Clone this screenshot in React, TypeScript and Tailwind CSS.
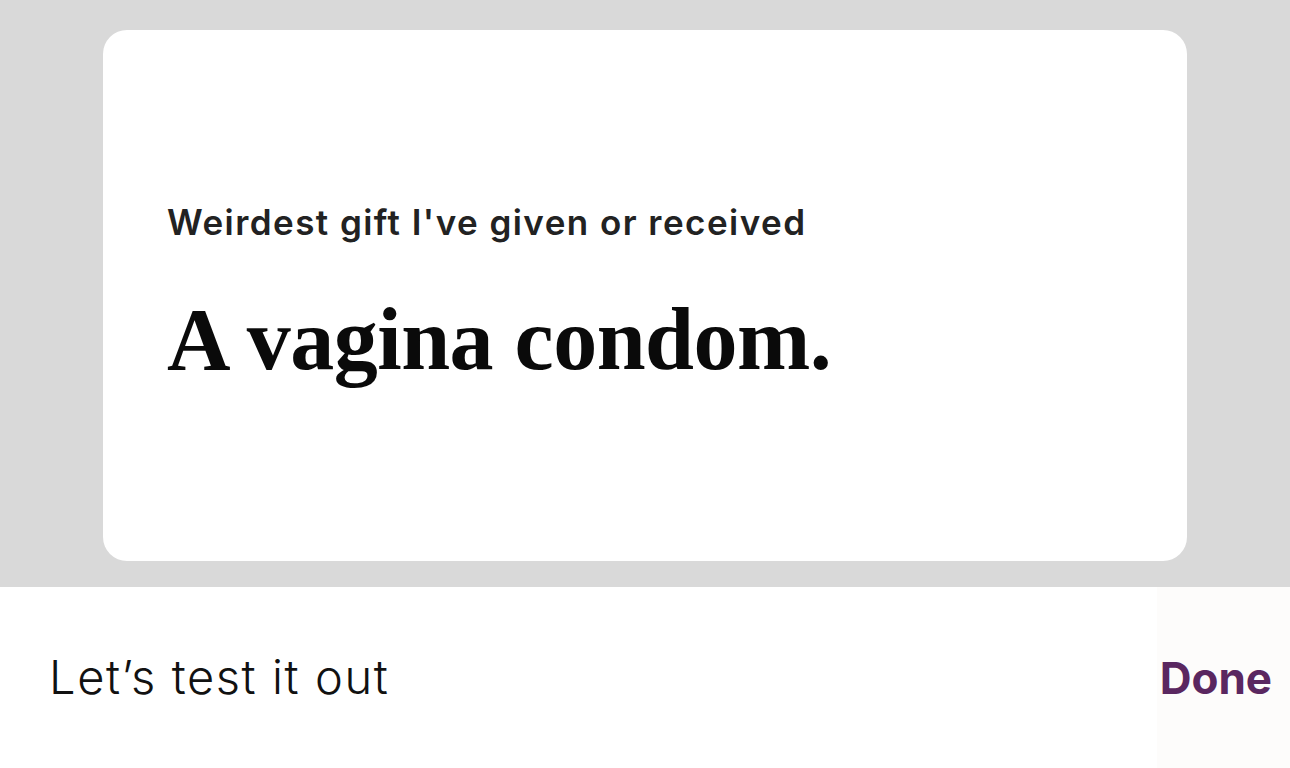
export default function App() {
  return (
    <div className="w-[1290px] h-[768px] flex flex-col bg-white overflow-hidden">
      <div className="h-[587px] bg-[#d9d9d9] pt-[30px] pl-[103px] pr-[103px]">
        <div className="h-[531px] bg-white rounded-[24px] pl-[64px] pt-[170px]">
          <div
            className="text-[35px] leading-[44px] font-semibold text-[#222] tracking-[1.45px]"
            style={{ fontFamily: '"Inter", "Liberation Sans", sans-serif' }}
          >
            Weirdest gift I've given or received
          </div>
          <div
            className="mt-[48px] text-[88px] leading-[96px] font-bold text-[#0a0a0a] tracking-[-0.5px]"
            style={{ fontFamily: '"Liberation Serif", serif' }}
          >
            A vagina condom.
          </div>
        </div>
      </div>
      <div className="flex-1 flex items-center justify-between pl-[49px] pr-[18px] bg-[linear-gradient(to_right,#ffffff_1157px,#fdfcfb_1157px)]">
        <div
          className="text-[47px] font-light text-[#111] tracking-[1.6px]"
          style={{ fontFamily: '"Inter", "Liberation Sans", sans-serif' }}
        >
          Let’s test it out
        </div>
        <div
          className="text-[44px] font-bold text-[#5a2760]"
          style={{ fontFamily: '"Inter", "Liberation Sans", sans-serif' }}
        >
          Done
        </div>
      </div>
    </div>
  );
}
